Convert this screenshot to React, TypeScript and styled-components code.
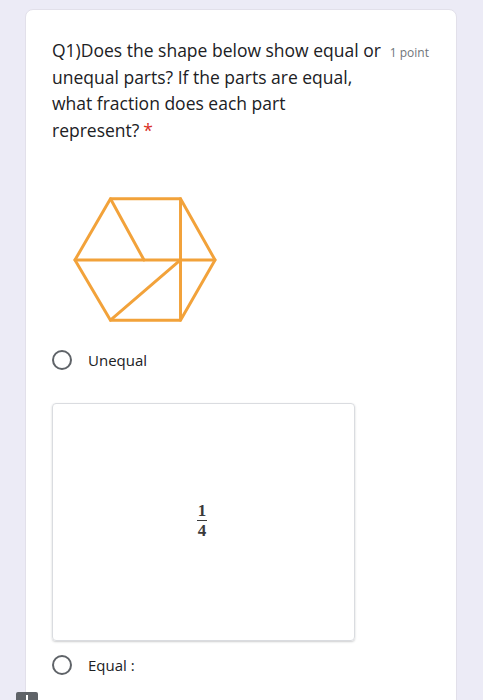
import styled, { createGlobalStyle } from 'styled-components';

const GlobalStyle = createGlobalStyle`
  html, body {
    margin: 0;
    padding: 0;
    background: #ecebf6;
    font-family: "Open Sans", Roboto, Arial, sans-serif;
    overflow: hidden;
  }
`;

const Page = styled.div`
  position: relative;
  height: 700px;
  padding: 9px 26px 0 25px;
  box-sizing: border-box;
`;

const Card = styled.div`
  background: #fff;
  border-radius: 8px;
  border: 1px solid #e2e0ea;
  padding: 27px 27px 40px 26px;
  height: 760px;
  box-sizing: border-box;
`;

const TitleRow = styled.div`
  display: flex;
  align-items: flex-start;
  justify-content: space-between;
`;

const Question = styled.div`
  font-size: 17.5px;
  line-height: 26.5px;
  color: #202124;
`;

const Required = styled.span`
  color: #d93025;
  margin-left: 4px;
`;

const Points = styled.span`
  font-size: 12px;
  color: #70757a;
  margin-top: 7px;
  white-space: nowrap;
`;

const Figure = styled.div`
  margin: 51px 0 0 20px;
  width: 146px;
  height: 130px;
`;

const Option = styled.label<{ $top: number }>`
  display: flex;
  align-items: center;
  gap: 16px;
  margin-top: ${(p) => p.$top}px;
  font-size: 15px;
  color: #202124;
`;

const Radio = styled.span`
  width: 16px;
  height: 16px;
  border: 2px solid #5f6368;
  border-radius: 50%;
  flex: none;
`;

const ImageBox = styled.div`
  margin-top: 33px;
  width: 303px;
  height: 238px;
  border: 1px solid #dadce0;
  border-radius: 4px;
  box-shadow: 0 1px 2px rgba(60, 64, 67, 0.25);
  display: flex;
  align-items: center;
  justify-content: center;
  box-sizing: border-box;
`;

const Fraction = styled.div`
  display: flex;
  flex-direction: column;
  align-items: center;
  font-family: "Liberation Serif", "DejaVu Serif", serif;
  font-size: 17px;
  font-weight: bold;
  color: #3a3a3a;
  line-height: 14px;
  margin-top: -2px;
  margin-right: 3px;
`;

const Bar = styled.span`
  width: 10px;
  height: 1px;
  background: #3a3a3a;
  margin: 2px 0 3px;
`;

const FabStub = styled.div`
  position: absolute;
  left: 16px;
  top: 692px;
  width: 22px;
  height: 22px;
  background: #5f6368;
  border-radius: 2px;
  &::after {
    content: '';
    position: absolute;
    left: 10px;
    top: 3px;
    width: 2px;
    height: 5px;
    background: #fff;
  }
`;

function Hexagon() {
  const c = '#f2a23a';
  return (
    <svg width="146" height="130" viewBox="70 192 148 130">
      <g fill="none" stroke={c} strokeWidth="3" strokeLinejoin="round" strokeLinecap="round">
        <polygon points="73,258 109,196 180,196 215,258 180,319 109,319" />
        <line x1="73" y1="258" x2="215" y2="258" />
        <line x1="180" y1="196" x2="180" y2="319" />
        <line x1="109" y1="196" x2="143" y2="258" />
        <line x1="180" y1="258" x2="109" y2="319" />
      </g>
    </svg>
  );
}

export default function App() {
  return (
    <>
      <GlobalStyle />
      <Page>
        <Card>
          <TitleRow>
            <Question>
              Q1)Does the shape below show equal or
              <br />
              unequal parts? If the parts are equal,
              <br />
              what fraction does each part
              <br />
              represent?<Required>*</Required>
            </Question>
            <Points>1 point</Points>
          </TitleRow>
          <Figure>
            <Hexagon />
          </Figure>
          <Option $top={26}>
            <Radio />
            Unequal
          </Option>
          <ImageBox>
            <Fraction>
              <span>1</span>
              <Bar />
              <span>4</span>
            </Fraction>
          </ImageBox>
          <Option $top={14}>
            <Radio />
            Equal :
          </Option>
        </Card>
        <FabStub />
      </Page>
    </>
  );
}
